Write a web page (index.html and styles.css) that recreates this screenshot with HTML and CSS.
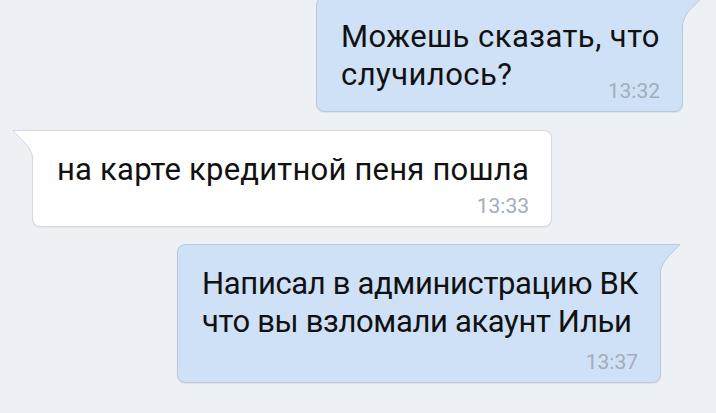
FILE: index.html
```html
<!DOCTYPE html>
<html lang="ru">
<head>
<meta charset="utf-8">
<link rel="stylesheet" href="styles.css">
</head>
<body>
<div class="chat">
  <div class="msg out msg-first">
    <svg class="tail tail-out" width="22" height="30" viewBox="0 0 22 30"><path d="M0 0 H21 C15 8 3 15 1 29 L0 29 Z" fill="#cfe1f7"/><path d="M0 0.5 H21 C15 8 3 15 1 29" fill="none" stroke="#b9c9db" stroke-width="1"/></svg>
    <div class="text text-wide">Можешь сказать, что<br>случилось?</div>
    <div class="time time-overlap">13:32</div>
  </div>
  <div class="msg in">
    <svg class="tail tail-in" width="22" height="30" viewBox="0 0 22 30"><path d="M22 0 H1 C7 8 19 15 21 29 L22 29 Z" fill="#ffffff"/><path d="M22 0.5 H1 C7 8 19 15 21 29" fill="none" stroke="#d3d9e0" stroke-width="1"/></svg>
    <div class="text text-mid">на карте кредитной пеня пошла</div>
    <div class="time">13:33</div>
  </div>
  <div class="msg out msg-third">
    <svg class="tail tail-out" width="22" height="30" viewBox="0 0 22 30"><path d="M0 0 H21 C15 8 3 15 1 29 L0 29 Z" fill="#cfe1f7"/><path d="M0 0.5 H21 C15 8 3 15 1 29" fill="none" stroke="#b9c9db" stroke-width="1"/></svg>
    <div class="text text-narrow">Написал в администрацию ВК<br>что вы взломали акаунт Ильи</div>
    <div class="time time-gap">13:37</div>
  </div>
</div>
</body>
</html>
```

FILE: styles.css
```css
html, body {
  margin: 0;
  padding: 0;
  background: #edf0f4;
  height: 100%;
  overflow: hidden;
}

.chat {
  display: flex;
  flex-direction: column;
  gap: 17px;
  font-family: Roboto, "Noto Sans", sans-serif;
}

.msg {
  position: relative;
  box-sizing: border-box;
  padding: 20px 22px 8px 24px;
  border-radius: 8px;
  border: 1px solid;
  box-shadow: 0 1px 1px rgba(0, 0, 0, 0.06);
}

.msg.out {
  align-self: flex-end;
  background: #cfe1f7;
  border-color: #b9c9db;
  border-top-right-radius: 0;
}

.msg.in {
  align-self: flex-start;
  background: #ffffff;
  border-color: #d3d9e0;
  border-top-left-radius: 0;
  margin-left: 32px;
  margin-top: 1px;
}

.msg-first {
  margin-top: -3px;
  margin-right: 33px;
}

.msg-third {
  margin-right: 55px;
}

.tail {
  position: absolute;
  top: -1px;
  display: block;
}

.tail-out {
  left: 100%;
  margin-left: -1px;
}

.tail-in {
  right: 100%;
  margin-right: -1px;
}

.text {
  font-size: 31px;
  line-height: 38px;
  color: #111111;
  white-space: nowrap;
}

.text-wide {
  letter-spacing: 0.45px;
}

.text-mid {
  letter-spacing: 0.22px;
}

.text-narrow {
  letter-spacing: -0.35px;
}

.time {
  font-size: 21px;
  line-height: 24px;
  color: #a2adb9;
  text-align: right;
  margin-top: 5px;
}

.time-overlap {
  margin-top: -15px;
}

.time-gap {
  margin-top: 9px;
}
```
